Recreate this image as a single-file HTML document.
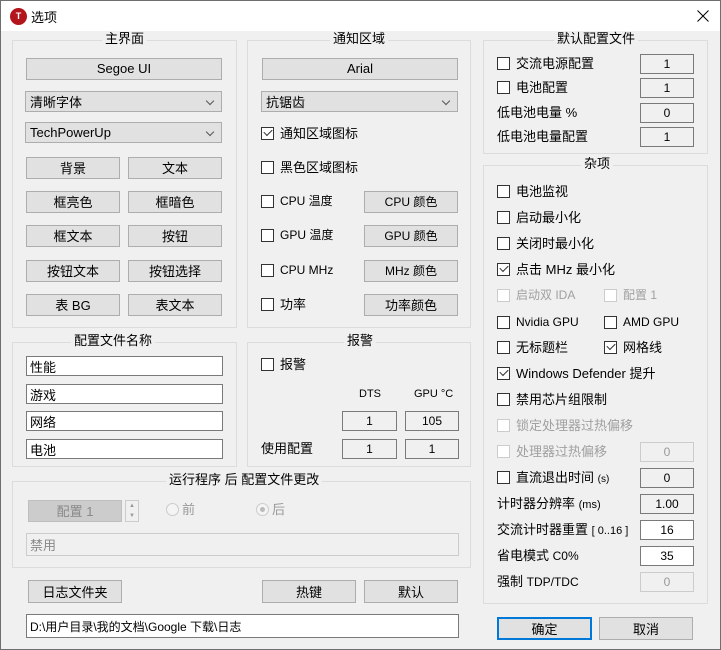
<!DOCTYPE html>
<html><head><meta charset="utf-8"><style>
*{box-sizing:border-box;margin:0;padding:0}
body{width:721px;height:650px;background:#f0f0f0;font-family:"Liberation Sans","Noto Sans CJK SC",sans-serif;font-size:12px;color:#000;position:relative;overflow:hidden}
.a{position:absolute}
#win{position:absolute;left:0;top:0;width:721px;height:650px;border:1px solid #6e6e6e;border-top:none}
#tb{position:absolute;left:0;top:0;width:721px;height:31px;background:#fff;border:1px solid #6e6e6e;border-bottom:none}
.g{position:absolute;border:1px solid #dcdcdc}
.gt{position:absolute;background:#f0f0f0;padding:0 3px;font-size:13px;top:-10px;line-height:16px;white-space:nowrap}
.b{position:absolute;background:#e1e1e1;border:1px solid #adadad;text-align:center;font-size:13px;display:flex;align-items:center;justify-content:center;padding-bottom:1px}
.cb{position:absolute;background:#e1e1e1;border:1px solid #adadad;font-size:13px;padding-left:4px;display:flex;align-items:center}
.cb::after{content:"";position:absolute;right:8px;top:6px;width:5px;height:5px;border-right:1px solid #555;border-bottom:1px solid #555;transform:rotate(45deg)}
.c{position:absolute;font-size:13px;white-space:nowrap;line-height:15px;padding-left:19px}
.c::before{content:"";position:absolute;left:0;top:1px;width:13px;height:13px;border:1px solid #333;background:#fff;box-sizing:border-box}
.c.k::after{content:"";position:absolute;left:3px;top:3px;width:7px;height:4px;border-left:1.3px solid #333;border-bottom:1.3px solid #333;transform:rotate(-45deg)}
.c.d{color:#a0a0a0}.c.d::before{border-color:#ccc}
.l{position:absolute;font-size:13px;white-space:nowrap;line-height:15px}
.i{position:absolute;border:1px solid #7a7a7a;background:#f0f0f0;font-size:12px;text-align:center;display:flex;align-items:center;justify-content:center}
.w{background:#fff}
.t{position:absolute;border:1px solid #7a7a7a;background:#fff;font-size:13px;padding-left:3px;display:flex;align-items:center}
.dis{border-color:#ccc;color:#999}
</style></head><body>
<div id="win"></div>
<div id="tb">
<div class="a" style="left:9px;top:7px;width:17px;height:17px;border-radius:50%;background:#b3151d;color:#fff;font-size:9px;font-weight:bold;text-align:center;line-height:17px">T</div>
<div class="a" style="left:30px;top:6px;font-size:13px">选项</div>
<svg class="a" style="left:696px;top:9px" width="12" height="12"><path d="M0.5 0.5L11.5 11.5M11.5 0.5L0.5 11.5" stroke="#000" stroke-width="1"/></svg>
</div>

<div class="g" style="left:12px;top:40px;width:225px;height:288px"><div class="gt" style="left:89px">主界面</div></div>
<div class="b" style="left:26px;top:58px;width:196px;height:22px">Segoe UI</div>
<div class="cb" style="left:25px;top:91px;width:197px;height:21px">清晰字体</div>
<div class="cb" style="left:25px;top:122px;width:197px;height:21px">TechPowerUp</div>
<div class="b" style="left:26px;top:157px;width:94px;height:22px">背景</div><div class="b" style="left:128px;top:157px;width:94px;height:22px">文本</div>
<div class="b" style="left:26px;top:191px;width:94px;height:22px">框亮色</div><div class="b" style="left:128px;top:191px;width:94px;height:22px">框暗色</div>
<div class="b" style="left:26px;top:225px;width:94px;height:22px">框文本</div><div class="b" style="left:128px;top:225px;width:94px;height:22px">按钮</div>
<div class="b" style="left:26px;top:260px;width:94px;height:22px">按钮文本</div><div class="b" style="left:128px;top:260px;width:94px;height:22px">按钮选择</div>
<div class="b" style="left:26px;top:294px;width:94px;height:22px">表 BG</div><div class="b" style="left:128px;top:294px;width:94px;height:22px">表文本</div>

<div class="g" style="left:247px;top:40px;width:224px;height:288px"><div class="gt" style="left:82px">通知区域</div></div>
<div class="b" style="left:262px;top:58px;width:196px;height:22px">Arial</div>
<div class="cb" style="left:261px;top:91px;width:197px;height:21px">抗锯齿</div>
<div class="c k" style="left:261px;top:126px">通知区域图标</div>
<div class="c" style="left:261px;top:160px">黑色区域图标</div>
<div class="c" style="left:261px;top:194px;font-size:12px">CPU 温度</div><div class="b" style="left:364px;top:191px;width:94px;height:22px;font-size:12px">CPU 颜色</div>
<div class="c" style="left:261px;top:228px;font-size:12px">GPU 温度</div><div class="b" style="left:364px;top:225px;width:94px;height:22px;font-size:12px">GPU 颜色</div>
<div class="c" style="left:261px;top:263px;font-size:12px">CPU MHz</div><div class="b" style="left:364px;top:260px;width:94px;height:22px;font-size:12px">MHz 颜色</div>
<div class="c" style="left:261px;top:297px">功率</div><div class="b" style="left:364px;top:294px;width:94px;height:22px">功率颜色</div>

<div class="g" style="left:483px;top:40px;width:225px;height:114px"><div class="gt" style="left:70px">默认配置文件</div></div>
<div class="c" style="left:497px;top:56px">交流电源配置</div><div class="i" style="left:640px;top:54px;width:54px;height:20px">1</div>
<div class="c" style="left:497px;top:80px">电池配置</div><div class="i" style="left:640px;top:78px;width:54px;height:20px">1</div>
<div class="l" style="left:497px;top:105px">低电池电量 %</div><div class="i" style="left:640px;top:103px;width:54px;height:20px">0</div>
<div class="l" style="left:497px;top:129px">低电池电量配置</div><div class="i" style="left:640px;top:127px;width:54px;height:20px">1</div>

<div class="g" style="left:483px;top:165px;width:225px;height:439px"><div class="gt" style="left:97px">杂项</div></div>
<div class="c" style="left:497px;top:184px">电池监视</div>
<div class="c" style="left:497px;top:210px">启动最小化</div>
<div class="c" style="left:497px;top:236px">关闭时最小化</div>
<div class="c k" style="left:497px;top:262px">点击 MHz 最小化</div>
<div class="c d" style="left:497px;top:288px;font-size:12px">启动双 IDA</div><div class="c d" style="left:604px;top:288px;font-size:12px">配置 1</div>
<div class="c" style="left:497px;top:315px;font-size:12px">Nvidia GPU</div><div class="c" style="left:604px;top:315px;font-size:12px">AMD GPU</div>
<div class="c" style="left:497px;top:340px">无标题栏</div><div class="c k" style="left:604px;top:340px">网格线</div>
<div class="c k" style="left:497px;top:366px">Windows Defender 提升</div>
<div class="c" style="left:497px;top:392px">禁用芯片组限制</div>
<div class="c d" style="left:497px;top:418px">锁定处理器过热偏移</div>
<div class="c d" style="left:497px;top:444px">处理器过热偏移</div><div class="i dis" style="left:640px;top:442px;width:54px;height:20px">0</div>
<div class="c" style="left:497px;top:470px">直流退出时间 <span style="font-size:10px">(s)</span></div><div class="i" style="left:640px;top:468px;width:54px;height:20px">0</div>
<div class="l" style="left:497px;top:496px">计时器分辨率 <span style="font-size:11px">(ms)</span></div><div class="i" style="left:640px;top:494px;width:54px;height:20px">1.00</div>
<div class="l" style="left:497px;top:522px">交流计时器重置 <span style="font-size:11px">[ 0..16 ]</span></div><div class="i w" style="left:640px;top:520px;width:54px;height:20px">16</div>
<div class="l" style="left:497px;top:548px">省电模式 <span style="font-size:12px">C0%</span></div><div class="i w" style="left:640px;top:546px;width:54px;height:20px">35</div>
<div class="l" style="left:497px;top:574px">强制 <span style="font-size:12px">TDP/TDC</span></div><div class="i dis" style="left:640px;top:572px;width:54px;height:20px">0</div>

<div class="g" style="left:12px;top:342px;width:225px;height:125px"><div class="gt" style="left:58px">配置文件名称</div></div>
<div class="t" style="left:26px;top:356px;width:197px;height:20px">性能</div>
<div class="t" style="left:26px;top:384px;width:197px;height:20px">游戏</div>
<div class="t" style="left:26px;top:411px;width:197px;height:20px">网络</div>
<div class="t" style="left:26px;top:439px;width:197px;height:20px">电池</div>

<div class="g" style="left:247px;top:342px;width:224px;height:125px"><div class="gt" style="left:96px">报警</div></div>
<div class="c" style="left:261px;top:357px">报警</div>
<div class="l" style="left:359px;top:387px;font-size:11px">DTS</div>
<div class="l" style="left:414px;top:387px;font-size:11px">GPU °C</div>
<div class="i" style="left:342px;top:411px;width:55px;height:20px">1</div><div class="i" style="left:405px;top:411px;width:54px;height:20px">105</div>
<div class="l" style="left:261px;top:441px">使用配置</div>
<div class="i" style="left:342px;top:439px;width:55px;height:20px">1</div><div class="i" style="left:405px;top:439px;width:54px;height:20px">1</div>

<div class="g" style="left:12px;top:481px;width:459px;height:87px"><div class="gt" style="left:153px">运行程序 后 配置文件更改</div></div>
<div class="b" style="left:28px;top:500px;width:94px;height:22px;background:#ccc;border-color:#bfbfbf;color:#888">配置 1</div>
<div class="a" style="left:125px;top:500px;width:14px;height:22px;border:1px solid #ccc;font-size:6px;color:#999;text-align:center;line-height:10px">▲<br>▼</div>
<div class="a" style="left:166px;top:503px;width:13px;height:13px;border:1px solid #ccc;border-radius:50%;background:#f4f4f4"></div><div class="l" style="left:182px;top:502px;color:#999">前</div>
<div class="a" style="left:256px;top:503px;width:13px;height:13px;border:1px solid #ccc;border-radius:50%;background:#f4f4f4"><div class="a" style="left:3px;top:3px;width:5px;height:5px;border-radius:50%;background:#bbb"></div></div><div class="l" style="left:272px;top:502px;color:#999">后</div>
<div class="t" style="left:26px;top:533px;width:433px;height:23px;background:#f0f0f0;border-color:#ccc;color:#888">禁用</div>

<div class="b" style="left:28px;top:580px;width:94px;height:23px">日志文件夹</div>
<div class="b" style="left:262px;top:580px;width:94px;height:23px">热键</div>
<div class="b" style="left:364px;top:580px;width:94px;height:23px">默认</div>
<div class="t" style="left:26px;top:614px;width:433px;height:24px;font-size:12px">D:\用户目录\我的文档\Google 下载\日志</div>
<div class="b" style="left:497px;top:617px;width:95px;height:23px;border:2px solid #0078d7">确定</div>
<div class="b" style="left:599px;top:617px;width:94px;height:23px">取消</div>
</body></html>
